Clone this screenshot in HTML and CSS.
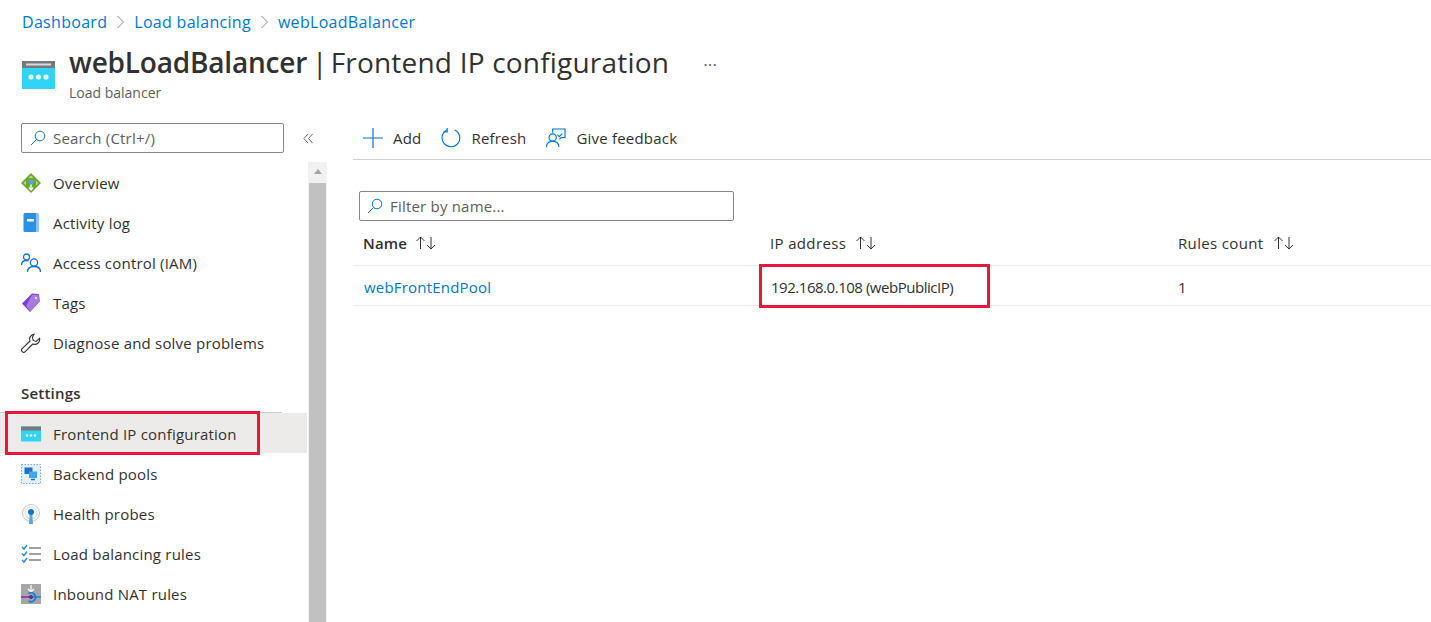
FILE: index.html
```html
<!DOCTYPE html>
<html lang="en">

<head>
  <meta charset="UTF-8">
  <title>webLoadBalancer | Frontend IP configuration</title>
  <link rel="stylesheet" href="styles.css">
</head>

<body>

  <nav class="crumbs">
    <a href="#">Dashboard</a>
    <svg class="crumb-sep" viewBox="0 0 8 14"><path d="M1 1l6 6-6 6" /></svg>
    <a href="#">Load balancing</a>
    <svg class="crumb-sep" viewBox="0 0 8 14"><path d="M1 1l6 6-6 6" /></svg>
    <a href="#">webLoadBalancer</a>
  </nav>

  <header class="title-row">
    <svg class="title-icon" viewBox="0 0 33 28">
      <rect width="33" height="28" fill="#32d4f5" />
      <rect width="33" height="7" fill="#747a80" />
      <rect x="4" y="2.500" width="25" height="2" fill="#d8dadc" />
      <circle cx="9" cy="16" r="2.600" fill="#e4f7fc" />
      <circle cx="16.500" cy="16" r="2.600" fill="#e4f7fc" />
      <circle cx="24" cy="16" r="2.600" fill="#e4f7fc" />
    </svg>
    <div>
      <h1><b>webLoadBalancer</b><span class="title-bar">|</span>Frontend IP configuration</h1>
      <p class="subtitle">Load balancer</p>
    </div>
    <span class="more">···</span>
  </header>

  <div class="layout">
    <aside class="sidebar">
      <div class="search-row">
        <label class="search search-side">
          <svg class="search-icon" viewBox="0 0 16 16"><circle cx="10" cy="6" r="4.800" /><path d="M6.600 9.400L1 15" /></svg>
          <span>Search (Ctrl+/)</span>
        </label>
        <svg class="collapse" viewBox="0 0 12 12"><path d="M5.500 1L1 6l4.500 5M10.500 1L6 6l4.500 5" /></svg>
      </div>

      <div class="side-body">
        <ul class="menu">
          <li>
            <svg viewBox="0 0 20 20">
              <path d="M10 0l10 10-10 10L0 10z" fill="#6aa82a" />
              <path d="M10 2.500l2.500 2.500h-5zM2.500 10L5 7.500v5zM17.500 10L15 7.500v5z" fill="#b5dc7e" />
              <path d="M10 10v7M7.800 14.500l2.200 2.500 2.200-2.500" stroke="#fff" stroke-width="1.400" fill="none" />
              <circle cx="10" cy="9" r="2.600" fill="#5b9bf0" />
            </svg>
            Overview
          </li>
          <li>
            <svg viewBox="0 0 20 20">
              <rect x="2.500" y="0" width="15" height="19" rx="1.500" fill="#2b8fe3" />
              <rect x="15" y="0" width="2.500" height="19" fill="#8cc4ef" />
              <rect x="6" y="6" width="7" height="2.500" fill="#e8f3fc" />
            </svg>
            Activity log
          </li>
          <li>
            <svg class="stroke-blue" viewBox="0 0 20 20">
              <circle cx="5.500" cy="4" r="3" />
              <path d="M.5 12c0-3 2-4.500 5-4.500 1 0 1.500.2 2 .4" />
              <circle cx="13" cy="9.500" r="3.600" />
              <path d="M6.500 19c0-3.500 2.500-5.500 6.500-5.500s6.500 2 6.500 5.500" />
            </svg>
            Access control (IAM)
          </li>
          <li>
            <svg viewBox="0 0 20 20">
              <path d="M1 10.500L11 .5l7 .5.800 7.500L9 19z" fill="#7b3fd0" />
              <path d="M5 13l6-11 6.500-.5.800 7-9 10z" fill="#a67ae0" />
              <circle cx="15" cy="5" r="1.300" fill="#e6daf7" />
            </svg>
            Tags
          </li>
          <li>
            <svg class="stroke-dark" viewBox="0 0 20 20">
              <path d="M13 1.200a5 5 0 0 0-4 6.800L1.200 15.600a2 2 0 0 0 3 3L11.800 11a5 5 0 0 0 6.800-5.600l-3.400 3-3-1-.8-3z" />
            </svg>
            Diagnose and solve problems
          </li>
        </ul>

        <h2 class="menu-head">Settings</h2>

        <ul class="menu menu-settings">
          <li class="selected">
            <svg viewBox="0 0 20 16">
              <rect y=".5" width="20" height="15" fill="#32d4f5" />
              <rect y=".5" width="20" height="4" fill="#747a80" />
              <circle cx="6" cy="9.500" r="1.300" fill="#fff" />
              <circle cx="10" cy="9.500" r="1.300" fill="#fff" />
              <circle cx="14" cy="9.500" r="1.300" fill="#fff" />
            </svg>
            Frontend IP configuration
            <span class="mark mark-side"></span>
          </li>
          <li>
            <svg viewBox="0 0 20 20">
              <rect x=".5" y=".5" width="19" height="19" fill="#e4eff9" stroke="#6aaee6" stroke-dasharray="1.500 1.500" />
              <rect x="3.500" y="3.500" width="8" height="6.500" fill="#1a73c9" />
              <rect x="8" y="7.500" width="8" height="6.500" fill="#4aa3ea" />
              <path d="M10 15.500h4" stroke="#1c6fbf" stroke-width="1.500" />
            </svg>
            Backend pools
          </li>
          <li>
            <svg viewBox="0 0 20 20">
              <circle cx="10" cy="9" r="8.500" fill="none" stroke="#c4c4c4" />
              <circle cx="10" cy="9" r="6" fill="none" stroke="#d6d6d6" />
              <path d="M8.800 9h2.400l.8 11H8z" fill="#5aa9dc" />
              <circle cx="10" cy="8" r="3" fill="#0b78d0" />
            </svg>
            Health probes
          </li>
          <li>
            <svg viewBox="0 0 20 20">
              <path d="M1 3l2 2 3-4M1 9.500l2 2 3-4M1 16l2 2 3-4" fill="none" stroke="#2f8fe6" stroke-width="1.500" />
              <path d="M8 4h12M8 10h12M8 16h12" stroke="#a0a0a0" stroke-width="1.800" />
            </svg>
            Load balancing rules
          </li>
          <li>
            <svg viewBox="0 0 20 20">
              <rect width="20" height="20" fill="#a6a6a8" />
              <path d="M10 1v7M7 5l3 3 3-3" fill="none" stroke="#fff" stroke-width="1.200" />
              <path d="M0 13h9" stroke="#8a4bab" stroke-width="2" />
              <path d="M11 13h9" stroke="#2f8fe6" stroke-width="2" />
              <path d="M7.500 9.500a4.500 4.500 0 1 1 0 7.500" fill="none" stroke="#1f7fd6" stroke-width="1.800" />
              <circle cx="10" cy="13" r="2" fill="#5a2d82" />
            </svg>
            Inbound NAT rules
          </li>
        </ul>

        <div class="scrollbar">
          <span class="scroll-up"></span>
          <span class="scroll-thumb"></span>
        </div>
      </div>
    </aside>

    <main class="content">
      <div class="toolbar">
        <span class="tool">
          <svg class="stroke-azure" viewBox="0 0 20 20"><path d="M10 0v20M0 10h20" /></svg>
          Add
        </span>
        <span class="tool">
          <svg class="stroke-azure" viewBox="0 0 21 21"><path d="M6 2.200a9.300 9.300 0 1 0 8.500-.2M6.500 0v4H2.500" /></svg>
          Refresh
        </span>
        <span class="tool">
          <svg class="stroke-azure" viewBox="0 0 21 21">
            <path d="M7 5V1h13v9h-4l-2 2" />
            <circle cx="7" cy="10" r="3.800" />
            <path d="M.5 20c0-3.500 2.500-6 6.500-6s6.500 2.500 6.500 6M12 7l2 2 3-3" />
          </svg>
          Give feedback
        </span>
      </div>

      <label class="search search-filter">
        <svg class="search-icon" viewBox="0 0 16 16"><circle cx="10" cy="6" r="4.800" /><path d="M6.600 9.400L1 15" /></svg>
        <span>Filter by name...</span>
      </label>

      <div class="grid-row grid-head">
        <div>Name <svg class="sort" viewBox="0 0 22 14"><path d="M5.500 13V1M1.500 5l4-4 4 4M16 1v12M12 9l4 4 4-4" /></svg></div>
        <div>IP address <svg class="sort" viewBox="0 0 22 14"><path d="M5.500 13V1M1.500 5l4-4 4 4M16 1v12M12 9l4 4 4-4" /></svg></div>
        <div>Rules count <svg class="sort" viewBox="0 0 22 14"><path d="M5.500 13V1M1.500 5l4-4 4 4M16 1v12M12 9l4 4 4-4" /></svg></div>
      </div>
      <div class="grid-row grid-item">
        <div><a href="#">webFrontEndPool</a></div>
        <div class="ip-cell">192.168.0.108 (webPublicIP)<span class="mark mark-ip"></span></div>
        <div>1</div>
      </div>
    </main>
  </div>

</body>

</html>
```

FILE: styles.css
```css
* {
  box-sizing: border-box;
}

html,
body {
  height: 622px;
  overflow: hidden;
}

body {
  margin: 0;
  background: #fff;
  color: #323130;
  font-family: "Open Sans", "Noto Sans", sans-serif;
  font-size: 15px;
  letter-spacing: 0.2px;
}

a {
  color: #0078d4;
  text-decoration: none;
}

svg {
  flex: none;
}

.crumbs {
  display: flex;
  align-items: center;
  gap: 9px;
  height: 20px;
  margin: 12px 0 0 22px;
  font-size: 16px;
  letter-spacing: 0.3px;
}

.crumb-sep {
  width: 9px;
  height: 14px;
  fill: none;
  stroke: #8a8886;
}

.title-row {
  display: flex;
  align-items: flex-start;
  height: 91px;
  padding: 11px 0 0 22px;
}

.title-icon {
  width: 33px;
  height: 28px;
  margin: 18px 14px 0 0;
}

.title-row h1 {
  margin: 0;
  font-size: 28px;
  line-height: 38px;
  font-weight: 400;
  letter-spacing: 0.2px;
}

.title-row h1 b {
  font-weight: 600;
  letter-spacing: -0.2px;
}

.title-bar {
  margin: 0 3px 0 5px;
}

.subtitle {
  margin: 3px 0 0;
  font-size: 14px;
  line-height: 18px;
  letter-spacing: 0;
  color: #605e5c;
}

.more {
  margin: 10px 0 0 34px;
  font-size: 17px;
  line-height: 24px;
  color: #605e5c;
}

.layout {
  display: flex;
}

.sidebar {
  width: 327px;
  flex: none;
  margin-right: 26px;
}

.search-row {
  display: flex;
  align-items: center;
  height: 30px;
  padding-left: 21px;
}

.collapse {
  width: 11px;
  height: 11px;
  margin-left: 19px;
  fill: none;
  stroke: #605e5c;
}

.search {
  display: flex;
  align-items: center;
  height: 30px;
  border: 1px solid #8a8886;
  border-radius: 2px;
  color: #605e5c;
}

.search-side {
  width: 263px;
  padding-left: 8px;
  gap: 7px;
}

.search-icon {
  width: 16px;
  height: 16px;
  fill: none;
  stroke: #0078d4;
}

.side-body {
  position: relative;
  margin-top: 9px;
  padding-top: 1px;
}

.menu {
  list-style: none;
  margin: 0;
  padding: 0;
  width: 307px;
}

.menu li {
  position: relative;
  display: flex;
  align-items: center;
  gap: 12px;
  height: 40px;
  padding-left: 21px;
}

.menu-settings li {
  padding-top: 2px;
}

.menu li svg {
  width: 20px;
  height: 20px;
}

.menu li.selected {
  background: #edebe9;
}

.menu-head {
  margin: 0;
  width: 282px;
  height: 50px;
  padding: 21px 0 0 21px;
  border-bottom: 1px solid #d2d0ce;
  font-size: 15px;
  line-height: 19px;
  font-weight: 600;
}

.stroke-blue {
  fill: none;
  stroke: #0f6fe0;
  stroke-width: 1.300;
}

.stroke-dark {
  fill: none;
  stroke: #323130;
  stroke-width: 1.100;
}

.stroke-azure {
  width: 20px;
  height: 20px;
  fill: none;
  stroke: #0078d4;
  stroke-width: 1.200;
}

.scrollbar {
  position: absolute;
  top: 0;
  left: 308px;
  bottom: 0;
  width: 19px;
  height: 460px;
  background: #f1f1f1;
}

.scroll-up {
  display: block;
  width: 0;
  margin: 7px auto 0;
  border: 4.500px solid transparent;
  border-top: 0;
  border-bottom: 5px solid #a3a3a3;
}

.scroll-thumb {
  display: block;
  height: 440px;
  margin: 9px 1px 0 1px;
  background: #c1c1c1;
}

.mark {
  position: absolute;
  border: 3px solid #e8173c;
  pointer-events: none;
}

.mark-side {
  top: -2px;
  left: 5px;
  width: 255px;
  height: 44px;
}

.content {
  flex: 1;
}

.toolbar {
  display: flex;
  align-items: center;
  gap: 20px;
  height: 37px;
  padding: 0 0 6px 10px;
  border-bottom: 1px solid #d2d0ce;
}

.tool {
  display: flex;
  align-items: center;
  gap: 10px;
}

.search-filter {
  width: 375px;
  margin: 31px 0 0 6px;
  padding-left: 7px;
  gap: 7px;
}

.grid-row {
  display: grid;
  grid-template-columns: 407px 408px 1fr;
  padding-left: 10px;
  border-bottom: 1px solid #edebe9;
}

.grid-head {
  height: 45px;
  align-items: center;
  font-weight: 600;
}

.grid-head div {
  display: flex;
  align-items: center;
  gap: 8px;
}

.grid-head div:not(:first-child) {
  gap: 9px;
  font-weight: 400;
  letter-spacing: 0.35px;
}

.sort {
  width: 22px;
  height: 14px;
  fill: none;
  stroke: #323130;
}

.grid-item {
  height: 40px;
  padding-top: 2px;
  align-items: center;
}

.grid-item a {
  margin-left: 1px;
}

.ip-cell {
  position: relative;
  padding-left: 1px;
  letter-spacing: -0.470px;
}

.mark-ip {
  top: -13px;
  left: -11px;
  width: 231px;
  height: 44px;
}
```
